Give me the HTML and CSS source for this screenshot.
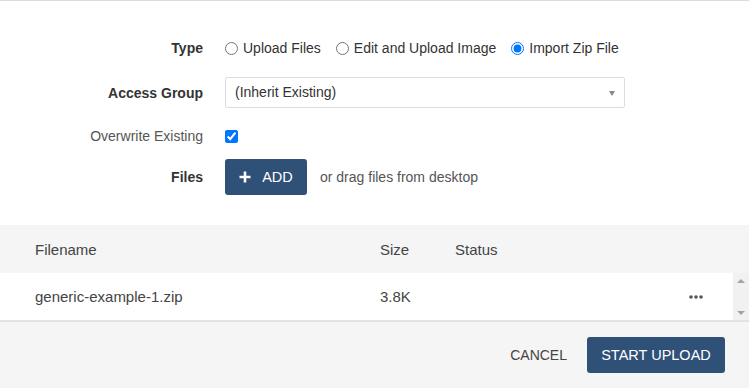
FILE: index.html
```html
<!DOCTYPE html>
<html lang="en">
<head>
    <meta charset="UTF-8">
    <meta name="viewport" content="width=device-width, initial-scale=1.0">
    <title>Upload Files</title>
    <link rel="stylesheet" href="styles.css">
</head>
<body>
    <div class="dialog">
        <form class="upload-form">
            <div class="form-row row-type">
                <label class="form-label bold">Type</label>
                <div class="form-control radios">
                    <label class="radio"><input type="radio" name="type"> Upload Files</label>
                    <label class="radio"><input type="radio" name="type"> Edit and Upload Image</label>
                    <label class="radio"><input type="radio" name="type" checked> Import Zip File</label>
                </div>
            </div>
            <div class="form-row row-group">
                <label class="form-label bold">Access Group</label>
                <div class="form-control">
                    <div class="select">(Inherit Existing)</div>
                </div>
            </div>
            <div class="form-row row-overwrite">
                <label class="form-label">Overwrite Existing</label>
                <div class="form-control">
                    <input type="checkbox" class="check" checked>
                </div>
            </div>
            <div class="form-row row-files">
                <label class="form-label bold">Files</label>
                <div class="form-control">
                    <a href="#" class="btn btn-add">
                        <svg width="12" height="12" viewBox="0 0 12 12"><path d="M6 0.5v11M0.5 6h11" stroke="#fff" stroke-width="2.6"/></svg>
                        ADD
                    </a>
                    <span class="drag-hint">or drag files from desktop</span>
                </div>
            </div>
        </form>

        <div class="file-table">
            <div class="table-head">
                <div class="col-name">Filename</div>
                <div class="col-size">Size</div>
                <div class="col-status">Status</div>
            </div>
            <div class="table-body">
                <div class="table-row">
                    <div class="col-name">generic-example-1.zip</div>
                    <div class="col-size">3.8K</div>
                    <div class="col-status"></div>
                    <div class="col-more">
                        <svg width="14" height="4" viewBox="0 0 14 4"><circle cx="2" cy="2" r="1.8" fill="#555"/><circle cx="7" cy="2" r="1.8" fill="#555"/><circle cx="12" cy="2" r="1.8" fill="#555"/></svg>
                    </div>
                </div>
                <div class="scrollbar">
                    <span class="arrow-up"></span>
                    <span class="arrow-down"></span>
                </div>
            </div>
        </div>

        <div class="dialog-footer">
            <a href="#" class="btn-cancel">CANCEL</a>
            <a href="#" class="btn btn-start">START UPLOAD</a>
        </div>
    </div>
</body>
</html>
```

FILE: styles.css
```css
body {
    margin: 0;
    padding: 0;
    font-family: 'Liberation Sans', Arial, sans-serif;
    font-size: 14px;
    color: #333;
    background-color: #fff;
}
.dialog {
    width: 749px;
    height: 388px;
    border-top: 1px solid #dcdcdc;
    box-sizing: border-box;
    overflow: hidden;
}
.upload-form {
    padding: 35px 0 30px;
}
.form-row {
    display: flex;
    align-items: center;
}
.form-label {
    width: 203px;
    text-align: right;
    color: #555;
    flex-shrink: 0;
}
.form-label.bold {
    font-weight: bold;
    color: #333;
}
.form-control {
    margin-left: 22px;
    display: flex;
    align-items: center;
}
.row-type {
    height: 24px;
    margin-bottom: 17px;
}
.row-group {
    height: 31px;
    margin-bottom: 17px;
}
.row-overwrite {
    height: 22px;
    margin-bottom: 12px;
}
.row-files {
    height: 36px;
}
.radio {
    display: inline-flex;
    align-items: center;
    gap: 5px;
    margin-right: 15px;
    color: #333;
}
.radio input {
    margin: 0;
    width: 13px;
    height: 13px;
}
.check {
    margin: 0;
    width: 13px;
    height: 13px;
}
.select {
    position: relative;
    width: 400px;
    height: 31px;
    box-sizing: border-box;
    border: 1px solid #ddd;
    border-radius: 2px;
    padding: 0 9px;
    line-height: 29px;
    color: #333;
}
.select::after {
    content: '';
    position: absolute;
    right: 9px;
    top: 13px;
    border-left: 3.5px solid transparent;
    border-right: 3.5px solid transparent;
    border-top: 5px solid #888;
}
.btn {
    display: inline-flex;
    align-items: center;
    justify-content: center;
    background-color: #2f5077;
    color: #fff;
    text-decoration: none;
    border-radius: 3px;
    height: 36px;
    box-sizing: border-box;
    font-size: 14.5px;
}
.btn-add {
    width: 82px;
    gap: 11px;
}
.drag-hint {
    margin-left: 13px;
    color: #555;
}
.file-table {
    font-size: 15px;
    color: #444;
}
.table-head {
    display: flex;
    align-items: center;
    height: 48px;
    background-color: #f5f5f5;
}
.col-name {
    width: 345px;
    padding-left: 35px;
}
.col-size {
    width: 75px;
}
.col-status {
    flex: 1;
}
.table-body {
    display: flex;
    height: 47px;
    border-bottom: 2px solid #e3e3e3;
}
.table-row {
    flex: 1;
    display: flex;
    align-items: center;
}
.col-more {
    width: 44px;
    display: flex;
    align-items: center;
}
.scrollbar {
    width: 16px;
    background-color: #f1f1f1;
    display: flex;
    flex-direction: column;
    justify-content: space-between;
    align-items: center;
    padding: 6px 0 5px;
    box-sizing: border-box;
}
.arrow-up {
    border-left: 4px solid transparent;
    border-right: 4px solid transparent;
    border-bottom: 4px solid #a3a3a3;
}
.arrow-down {
    border-left: 4px solid transparent;
    border-right: 4px solid transparent;
    border-top: 4px solid #a3a3a3;
}
.dialog-footer {
    display: flex;
    justify-content: flex-end;
    align-items: center;
    height: 66px;
    padding-right: 24px;
    background-color: #f5f5f5;
}
.btn-cancel {
    color: #444;
    text-decoration: none;
    margin-right: 20px;
}
.btn-start {
    width: 138px;
}
```
